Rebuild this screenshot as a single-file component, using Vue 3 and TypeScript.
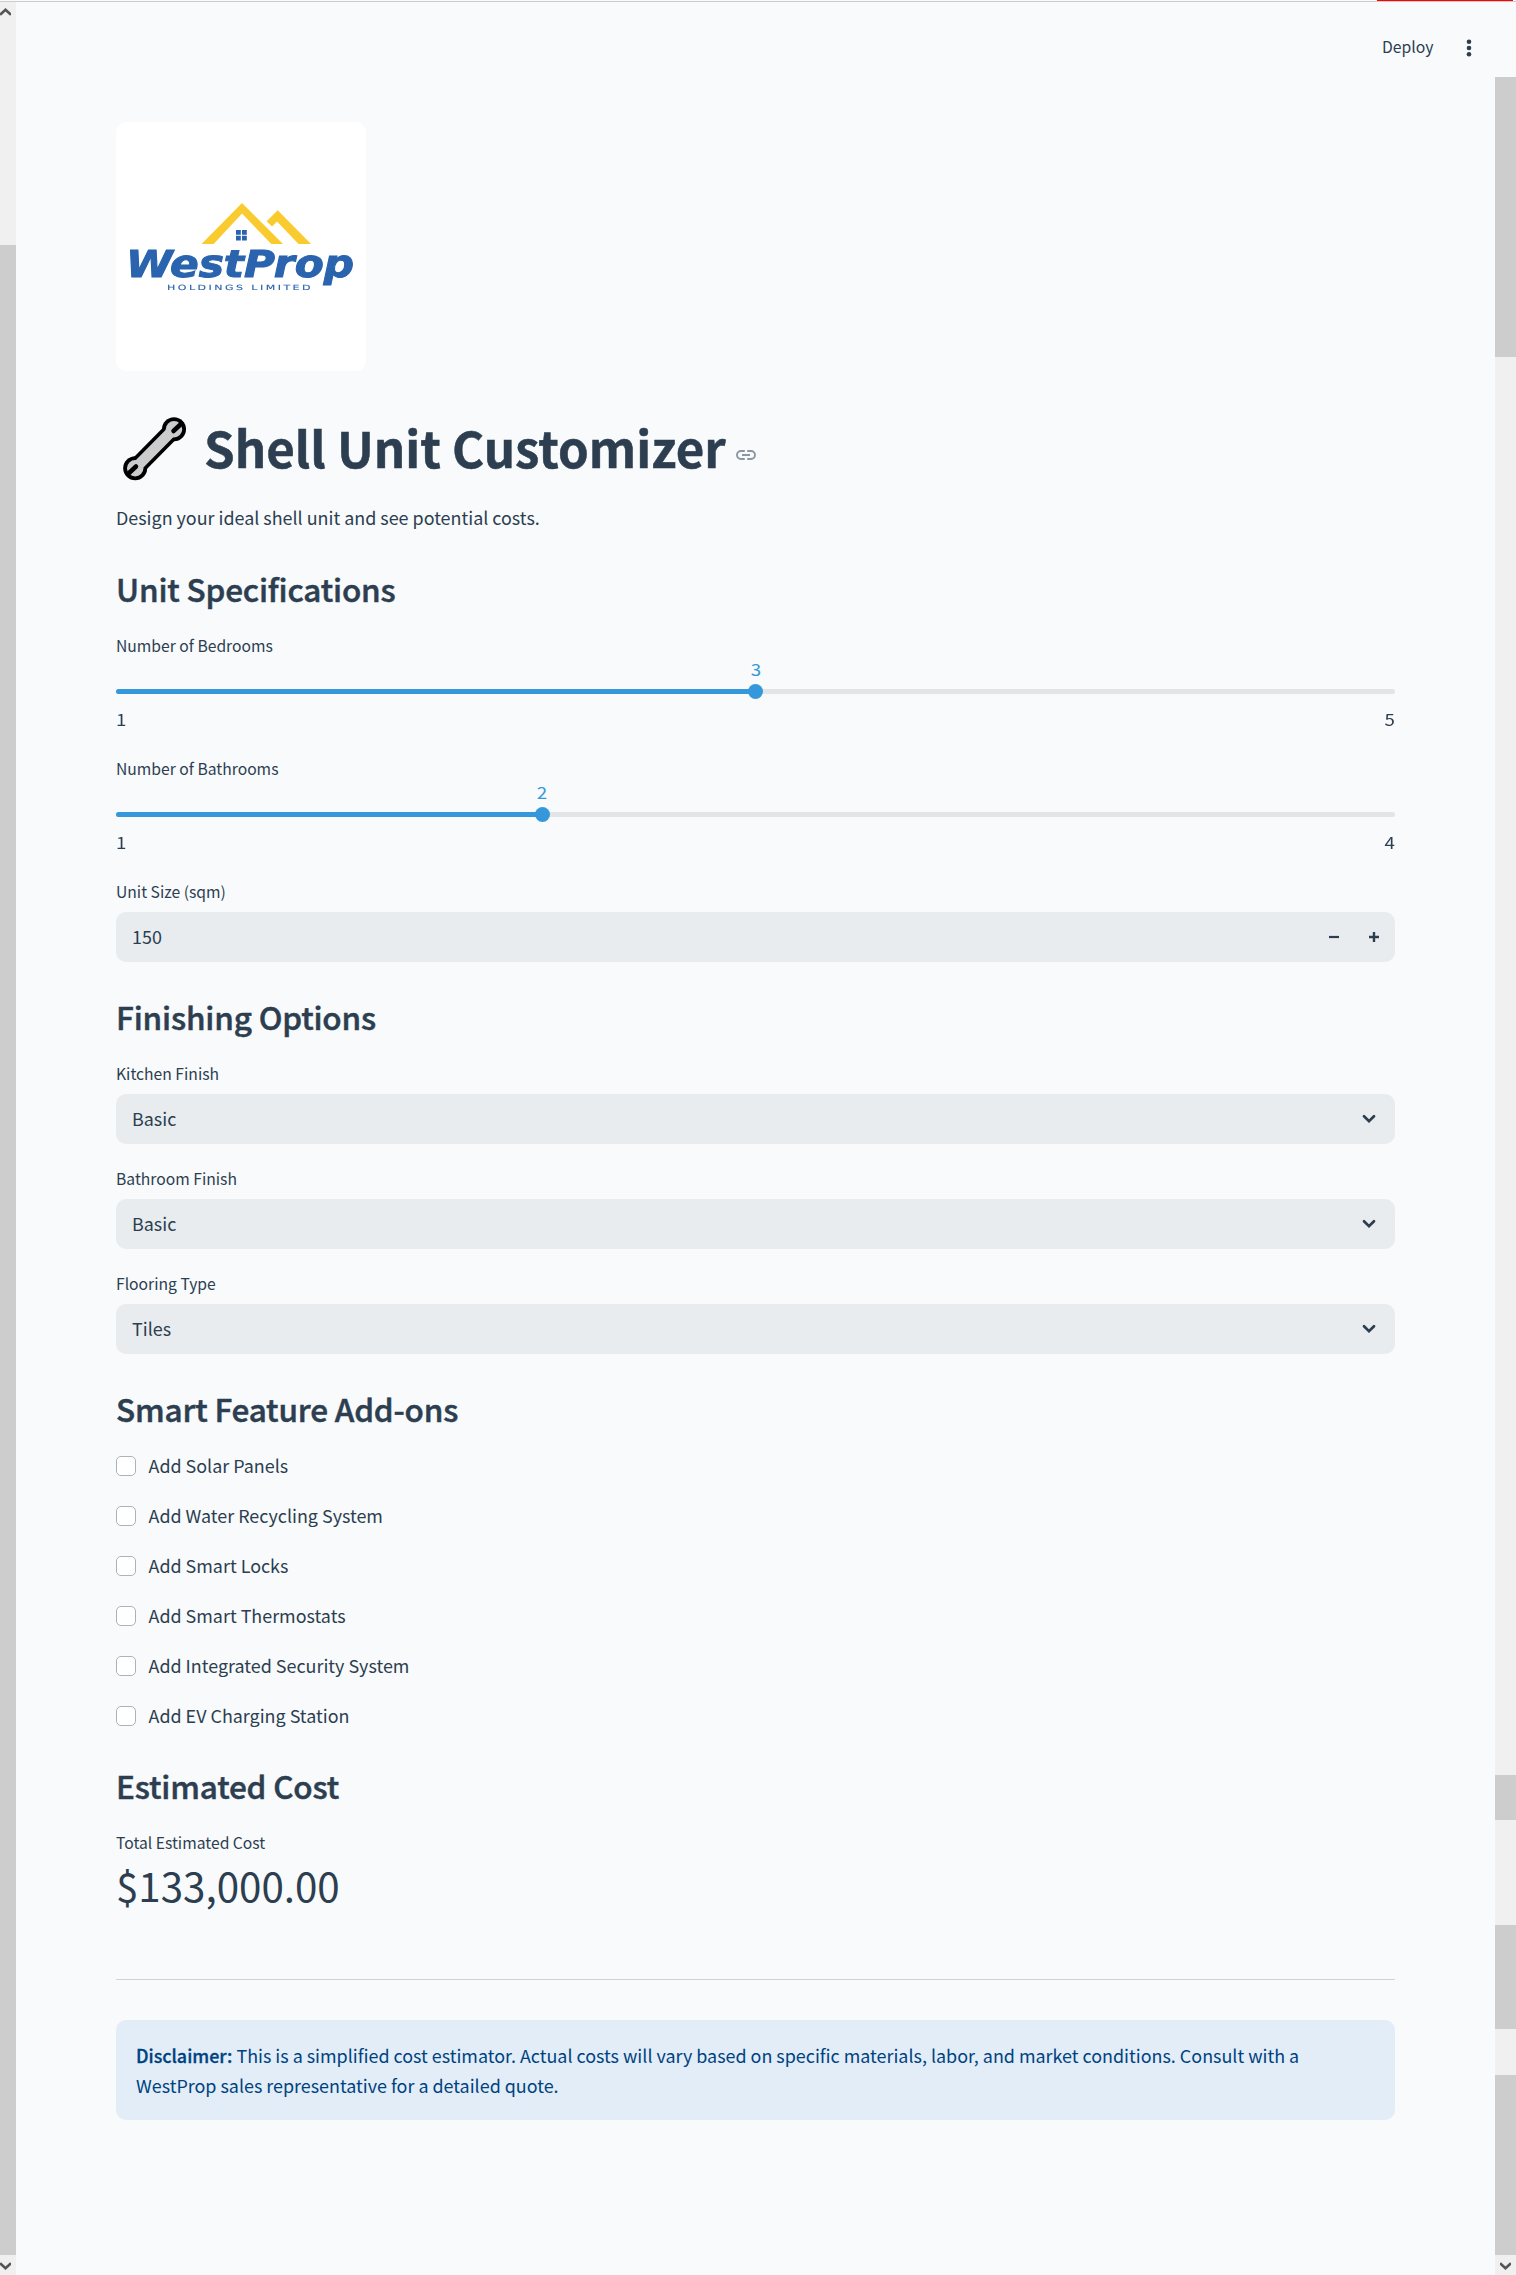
<script setup lang="ts">
import { ref } from 'vue'

interface Slider { label: string; min: number; max: number; value: number }
interface Choice { label: string; value: string }

const sliders = ref<Slider[]>([
  { label: 'Number of Bedrooms', min: 1, max: 5, value: 3 },
  { label: 'Number of Bathrooms', min: 1, max: 4, value: 2 },
])
const choices = ref<Choice[]>([
  { label: 'Kitchen Finish', value: 'Basic' },
  { label: 'Bathroom Finish', value: 'Basic' },
  { label: 'Flooring Type', value: 'Tiles' },
])
const addons: string[] = [
  'Add Solar Panels',
  'Add Water Recycling System',
  'Add Smart Locks',
  'Add Smart Thermostats',
  'Add Integrated Security System',
  'Add EV Charging Station',
]
const percent = (s: Slider): string => `${((s.value - s.min) / (s.max - s.min)) * 100}%`
</script>

<template>
  <div class="page">
    <div class="topline"><span class="progress"></span></div>
    <div class="body">
      <aside class="bar left">
        <svg class="arrow" width="11" height="8" viewBox="0 0 11 8"><path d="M0 6.8 5.5 1.8 11 6.8" /></svg>
        <div class="thumb"></div>
        <svg class="arrow down" width="11" height="8" viewBox="0 0 11 8"><path d="M0 1.2 5.5 6.2 11 1.2" /></svg>
      </aside>

      <main class="main">
        <header class="toolbar">
          <span class="deploy">Deploy</span>
          <svg width="6" height="18" viewBox="0 0 6 18" fill="#2c3e50">
            <circle cx="3" cy="2.7" r="2.3" /><circle cx="3" cy="9" r="2.3" /><circle cx="3" cy="15.2" r="2.3" />
          </svg>
        </header>

        <svg class="logo" width="250" height="249" viewBox="0 0 250 249">
          <g class="logo-art">
            <path fill="#f9cb2e" d="M126 81 167 122H155.3L126 91.5 97.7 122H85.5Z" />
            <path fill="#f9cb2e" d="M150.7 99.3 161.7 88.3 195 122H182.5L161 99.5 156 104.5Z" />
            <path fill="#2a63ae" d="M120 108h4.8v4.8H120zM126 108h4.8v4.8H126zM120 113.8h4.8v4.7H120zM126 113.8h4.8v4.7H126z" />
            <text class="brand" x="10" y="154.5" textLength="228" lengthAdjust="spacingAndGlyphs">WestProp</text>
            <text class="sub" x="51" y="168" textLength="146" lengthAdjust="spacingAndGlyphs">HOLDINGS LIMITED</text>
          </g>
        </svg>

        <h1>
          <svg class="wrench" width="64" height="64" viewBox="0 0 64 64">
            <g stroke-linecap="round">
              <path d="M12 51.5 51 12" stroke="#000" stroke-width="17.5" stroke-linecap="butt" />
              <circle cx="12.2" cy="51.3" r="12" /><circle cx="51" cy="12.2" r="12" />
              <path d="M12 51.5 51 12" stroke="#ccc" stroke-width="10.5" />
              <circle cx="12.2" cy="51.3" r="8.2" fill="#ccc" /><circle cx="51" cy="12.2" r="8.2" fill="#ccc" />
              <path d="M5 57 13 49.5M58.5 6.5 50.5 14" stroke="#000" stroke-width="4.5" />
            </g>
          </svg>
          <span class="title">Shell Unit Customizer</span>
          <svg class="link" width="20" height="10" viewBox="0 0 20 10" fill="none" stroke="#8c96a3" stroke-width="1.9">
            <path d="M8.8 1H5a4 4 0 0 0 0 8h3.8M11.2 1H15a4 4 0 0 1 0 8h-3.8M6 5h8" />
          </svg>
        </h1>
        <p class="intro">Design your ideal shell unit and see potential costs.</p>

        <h2 class="first">Unit Specifications</h2>
        <section v-for="s in sliders" :key="s.label" class="slider">
          <div class="label">{{ s.label }}</div>
          <div class="value"><span :style="{ left: percent(s) }">{{ s.value }}</span></div>
          <div class="track">
            <div class="fill" :style="{ width: percent(s) }"></div>
            <i class="knob" :style="{ left: percent(s) }"></i>
          </div>
          <div class="ends"><span>{{ s.min }}</span><span>{{ s.max }}</span></div>
        </section>
        <div class="label">Unit Size (sqm)</div>
        <div class="field">
          <span class="text">150</span>
          <span class="steps">
            <svg width="10" height="10" viewBox="0 0 10 10"><path d="M0 5h10" stroke="#2c3e50" stroke-width="2.2" /></svg>
            <svg width="10" height="10" viewBox="0 0 10 10"><path d="M0 5h10M5 0v10" stroke="#2c3e50" stroke-width="2.4" /></svg>
          </span>
        </div>

        <h2>Finishing Options</h2>
        <section v-for="c in choices" :key="c.label" class="choice">
          <div class="label">{{ c.label }}</div>
          <div class="field">
            <span class="text">{{ c.value }}</span>
            <svg class="chevron" width="14" height="10" viewBox="0 0 14 10">
              <path d="M2 2.2 7 7.2 12 2.2" fill="none" stroke="#2c3e50" stroke-width="2.7" stroke-linecap="round" />
            </svg>
          </div>
        </section>

        <h2>Smart Feature Add-ons</h2>
        <div class="addons">
          <label v-for="a in addons" :key="a" class="addon"><i class="box"></i><span>{{ a }}</span></label>
        </div>

        <h2 class="cost">Estimated Cost</h2>
        <div class="label">Total Estimated Cost</div>
        <div class="total">$133,000.00</div>
        <div class="rule"></div>
        <div class="notice">
          <strong>Disclaimer:</strong> This is a simplified cost estimator. Actual costs will vary based on specific materials, labor, and market conditions. Consult with a<br />WestProp sales representative for a detailed quote.
        </div>
      </main>

      <aside class="bar right">
        <div class="gap-top"></div>
        <div class="thumb t1"></div>
        <div class="thumb t2"></div>
        <div class="thumb t3"></div>
        <div class="thumb t4"></div>
        <svg class="arrow down" width="11" height="8" viewBox="0 0 11 8"><path d="M0 1.2 5.5 6.2 11 1.2" /></svg>
      </aside>
    </div>
  </div>
</template>

<style>
body { margin: 0; background: #f8fafc; overflow: hidden; }
</style>

<style scoped>
.page {
  width: 1516px;
  height: 2275px;
  background: #f8fafc;
  color: #2c3e50;
  font-family: "Noto Sans CJK SC", "Noto Sans", sans-serif;
  font-size: 17.92px;
  line-height: 30px;
  overflow: hidden;
}
.topline { box-sizing: border-box; height: 2px; border-bottom: 1px solid #ccc; display: flex; justify-content: flex-end; }
.progress { width: 136px; height: 1px; margin-right: 3px; background: #f00; }
.body { display: flex; height: 2273px; }
.bar { display: flex; flex-direction: column; flex: none; background: #f0f0f0; }
.left { width: 16px; }
.left .thumb { height: 2010px; margin-top: 229px; }
.thumb { background: #cdcdcd; flex: none; }
.arrow { display: block; flex: none; margin-top: 6px; fill: none; stroke: #555; stroke-width: 2.7; }
.arrow.down { margin-top: 7px; }
.right { width: 21px; }
.gap-top { height: 75px; background: #f8fafc; }
.t1 { height: 280px; }
.t2 { height: 45px; margin-top: 1418px; }
.t3 { height: 104px; margin-top: 105px; }
.t4 { height: 180px; margin-top: 46px; }
.right .arrow { margin-left: 5px; }
.main { flex: 1; padding: 0 100px; box-sizing: border-box; }
.toolbar { height: 120px; display: flex; justify-content: flex-end; margin-right: -76.5px; }
.toolbar svg { margin: 37px 0 0 32px; }
.deploy { font-size: 15.75px; line-height: 26px; margin-top: 32px; }
.logo { display: block; background: #fff; border-radius: 10px; }
.logo-art { filter: blur(0.5px); }
.brand { font: italic bold 36.5px "DejaVu Sans", sans-serif; fill: #2a63ae; stroke: #2a63ae; stroke-width: 1px; }
.sub { font: 7.2px "DejaVu Sans", sans-serif; letter-spacing: 1.6px; fill: #2a63ae; stroke: #2a63ae; stroke-width: 0.1px; }
h1 { margin: 42px 0 0; height: 66px; line-height: 68px; font-size: 49.2px; font-weight: 700; display: flex; white-space: nowrap; }
.wrench { flex: none; margin: 4px 0 0 7px; }
.title { width: 521px; margin-left: 17px; -webkit-text-stroke: 0.5px currentColor; }
.link { margin: 37px 0 0 11px; }
.intro { margin: 23px 0 0; }
h2 { margin: 33px 0 23px; font-size: 31.5px; line-height: 42px; font-weight: 500; letter-spacing: -0.17px; -webkit-text-stroke: 0.5px currentColor; }
h2.first { margin-top: 35px; }
h2.cost { margin-top: 34px; }
.label { height: 26px; font-size: 15.68px; line-height: 28px; }
.slider { height: 123px; }
.value { position: relative; height: 26px; margin-top: -2px; color: #3498db; font-size: 15.9px; line-height: 28px; }
.value span { position: absolute; transform: translateX(-50%) scaleX(1.18); }
.track { position: relative; height: 5px; margin-top: 7px; border-radius: 3px; background: #e1e5e8; }
.fill { height: 5px; border-radius: 3px; background: #3498db; }
.knob { position: absolute; top: -5px; width: 15px; height: 15px; margin-left: -7.5px; border-radius: 50%; background: #3498db; }
.ends { display: flex; justify-content: space-between; height: 26px; margin-top: 12px; font-size: 15.9px; line-height: 28px; }
.ends span { transform: scaleX(1.18); transform-origin: left; }
.ends span + span { transform-origin: right; }
.field { box-sizing: border-box; height: 50px; margin-top: 8px; padding: 0 16px; border-radius: 10px; background: #e8ecee; display: flex; align-items: center; justify-content: space-between; }
.text { padding-bottom: 2px; }
.steps { display: flex; gap: 30px; }
.chevron { margin-right: 3px; }
.choice + .choice { margin-top: 21px; }
.addons { display: flex; flex-direction: column; gap: 20px; margin-top: -2px; }
.addon { display: flex; height: 30px; }
.box { box-sizing: border-box; width: 20px; height: 20px; margin: 6px 12.5px 0 0; border: 1px solid #abb2bb; border-radius: 5px; background: #fff; }
.total { height: 56px; margin-top: 1px; font-size: 40.3px; line-height: 58px; }
.rule { height: 1px; margin-top: 67px; background: #d0d3d8; }
.notice { box-sizing: border-box; height: 100px; margin-top: 40px; padding: 20px; border-radius: 10px; background: #e2edf7; color: #004280; white-space: nowrap; }
.notice strong { font-weight: 500; -webkit-text-stroke: 0.3px currentColor; }
</style>
